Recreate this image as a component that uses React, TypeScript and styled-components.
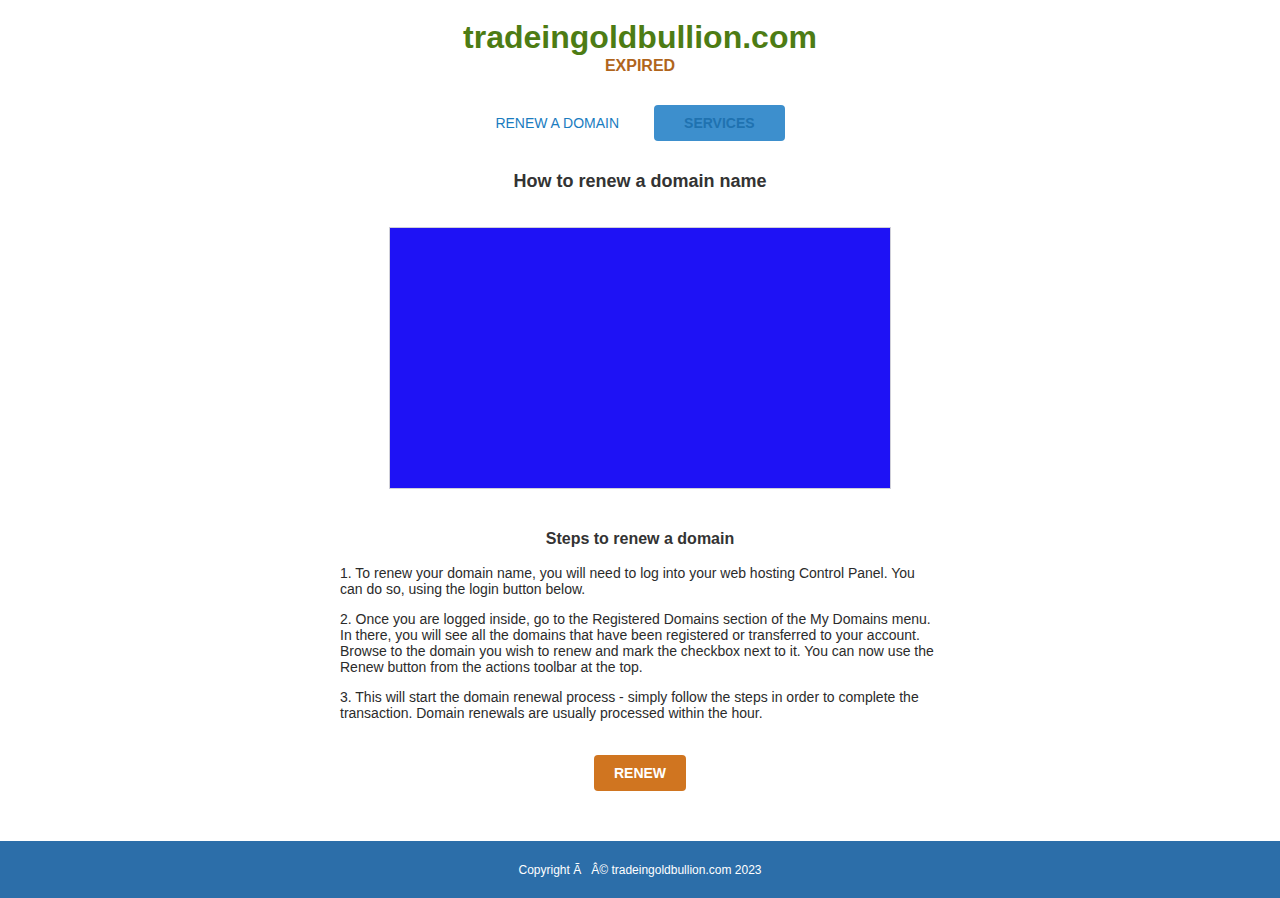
import React from "react";
import styled, { createGlobalStyle } from "styled-components";

const Global = createGlobalStyle`
  html, body { margin: 0; padding: 0; background: #ffffff; }
  body { font-family: "Liberation Sans", Arial, sans-serif; color: #333333; }
  * { box-sizing: border-box; }
`;

const Page = styled.div`
  display: flex;
  flex-direction: column;
  min-height: 898px;
`;

const Main = styled.main`
  display: flex;
  flex-direction: column;
  align-items: center;
  padding-top: 21px;
  flex: 1;
`;

const Title = styled.h1`
  margin: 0;
  font-size: 32px;
  line-height: 32px;
  font-weight: 700;
  color: #4d7c14;
`;

const Status = styled.div`
  margin-top: 4px;
  font-size: 16px;
  font-weight: 700;
  color: #b0651c;
  line-height: 18px;
`;

const Nav = styled.nav`
  display: flex;
  align-items: center;
  gap: 35px;
  margin-top: 30px;
`;

const NavLink = styled.a<{ $active?: boolean }>`
  display: flex;
  align-items: center;
  justify-content: center;
  height: 36px;
  font-size: 14px;
  text-decoration: none;
  cursor: pointer;
  color: ${(p) => (p.$active ? "#1f72b0" : "#1a7cbf")};
  font-weight: ${(p) => (p.$active ? 700 : 400)};
  background: ${(p) => (p.$active ? "#3d8fcd" : "transparent")};
  border-radius: 4px;
  padding: ${(p) => (p.$active ? "0 30px" : "0")};
`;

const Heading = styled.h2`
  margin: 30px 0 0;
  font-size: 18px;
  line-height: 21px;
  font-weight: 700;
  color: #333333;
`;

const Video = styled.div`
  margin-top: 35px;
  width: 502px;
  height: 262px;
  background: #1e12f5;
  border: 1px solid #cfcfd8;
`;

const Steps = styled.section`
  width: 600px;
  margin-top: 41px;
  display: flex;
  flex-direction: column;
`;

const StepsTitle = styled.h3`
  margin: 0 0 17px;
  text-align: center;
  font-size: 16px;
  line-height: 18px;
  font-weight: 700;
  color: #333333;
`;

const Step = styled.p`
  margin: 0 0 14px;
  font-size: 14px;
  line-height: 16px;
  color: #2b2b2b;
  &:last-child { margin-bottom: 0; }
`;

const RenewButton = styled.button`
  margin-top: 34px;
  height: 36px;
  padding: 0 20px;
  border: none;
  border-radius: 4px;
  background: #d07520;
  color: #ffffff;
  font-family: "Liberation Sans", Arial, sans-serif;
  font-size: 14px;
  font-weight: 700;
  cursor: pointer;
`;

const Footer = styled.footer`
  margin-top: 50px;
  background: #2c6ea9;
  color: #ffffff;
  text-align: center;
  font-size: 12px;
  line-height: 15px;
  padding: 22px 0 20px;
`;

export default function App() {
  return (
    <>
      <Global />
      <Page>
        <Main>
          <Title>tradeingoldbullion.com</Title>
          <Status>EXPIRED</Status>
          <Nav>
            <NavLink>RENEW A DOMAIN</NavLink>
            <NavLink $active>SERVICES</NavLink>
          </Nav>
          <Heading>How to renew a domain name</Heading>
          <Video />
          <Steps>
            <StepsTitle>Steps to renew a domain</StepsTitle>
            <Step>
              1. To renew your domain name, you will need to log into your web hosting Control Panel. You can do so, using the login button below.
            </Step>
            <Step>
              2. Once you are logged inside, go to the Registered Domains section of the My Domains menu. In there, you will see all the domains that have been registered or transferred to your account. Browse to the domain you wish to renew and mark the checkbox next to it. You can now use the Renew button from the actions toolbar at the top.
            </Step>
            <Step>
              3. This will start the domain renewal process - simply follow the steps in order to complete the transaction. Domain renewals are usually processed within the hour.
            </Step>
          </Steps>
          <RenewButton>RENEW</RenewButton>
        </Main>
        <Footer>Copyright Ã{"\u00a0\u00a0\u00a0"}Â© tradeingoldbullion.com 2023</Footer>
      </Page>
    </>
  );
}
